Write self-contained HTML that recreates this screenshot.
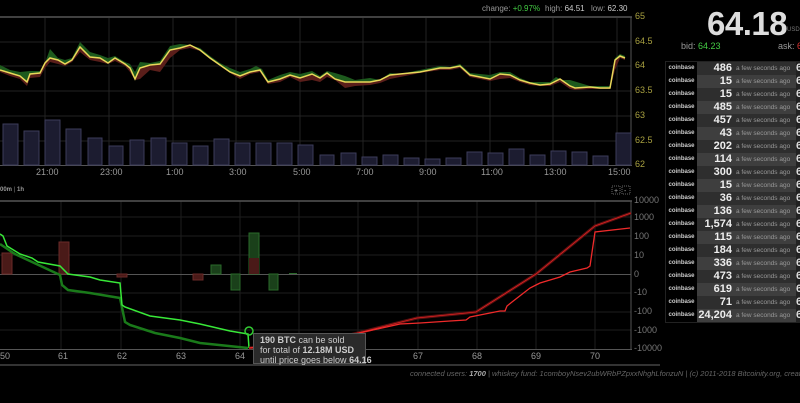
<!DOCTYPE html><html><head><style>
body{margin:0;width:800px;height:403px;background:#000;overflow:hidden;font-family:"Liberation Sans",sans-serif;position:relative}
.a{position:absolute;white-space:nowrap}
.ax{font-size:9px;color:#a8a040}
.tl{font-size:9px;color:#999}
.dl{font-size:9px;color:#777}
table{border-collapse:collapse;position:absolute;left:665px;top:61px;border:1px solid #222;table-layout:fixed;width:140px}
td{height:13px;padding:0;font-size:7px;color:#888;white-space:nowrap;overflow:hidden;line-height:13px}
td.e{width:31px;background:#000;color:#ccc;font-weight:bold;text-align:center;font-size:6px}
td.n{width:35px;text-align:right;color:#eee;font-weight:bold;font-size:11px;padding-right:2px}
td.t{width:60px;font-size:6.5px;color:#999;padding-left:2px}
td.p{width:10px;background:#222;color:#ddd;font-size:11px;font-weight:bold}
tr:nth-child(odd) td.n,tr:nth-child(odd) td.t{background:#2e2e2e}
tr:nth-child(even) td.n,tr:nth-child(even) td.t{background:#3e3e3e}
</style></head><body>
<div class="a" style="left:482px;top:4px;font-size:8px;color:#999">change: <span style="color:#4c4">+0.97%</span></div>
<div class="a" style="left:545px;top:4px;font-size:8px;color:#999">high: <span style="color:#ccc">64.51</span></div>
<div class="a" style="left:591px;top:4px;font-size:8px;color:#999">low: <span style="color:#ccc">62.30</span></div>
<div class="a" style="left:707px;top:5px;font-size:33px;color:#ddd;font-weight:bold;letter-spacing:-0.5px">64.18</div>
<div class="a" style="left:787px;top:27px;font-size:6px;color:#777">USD</div>
<div class="a" style="left:681px;top:41px;font-size:9px;color:#999">bid: <span style="color:#4c4">64.23</span></div>
<div class="a" style="left:778px;top:41px;font-size:9px;color:#999">ask: <span style="color:#d33">64</span></div>
<svg class="a" style="left:0;top:0" width="660" height="403">
<g stroke="#222" stroke-width="1">
<line x1="0" y1="42" x2="631" y2="42"/><line x1="0" y1="66" x2="631" y2="66"/><line x1="0" y1="91" x2="631" y2="91"/><line x1="0" y1="116" x2="631" y2="116"/><line x1="0" y1="141" x2="631" y2="141"/>
<line x1="45" y1="18" x2="45" y2="165"/><line x1="109" y1="18" x2="109" y2="165"/><line x1="173" y1="18" x2="173" y2="165"/><line x1="236" y1="18" x2="236" y2="165"/><line x1="300" y1="18" x2="300" y2="165"/><line x1="363" y1="18" x2="363" y2="165"/><line x1="426" y1="18" x2="426" y2="165"/><line x1="490" y1="18" x2="490" y2="165"/><line x1="553" y1="18" x2="553" y2="165"/><line x1="617" y1="18" x2="617" y2="165"/>
</g>
<line x1="0" y1="17" x2="632" y2="17" stroke="#555" stroke-width="1.5"/>
<line x1="631" y1="17" x2="631" y2="166" stroke="#555"/>
<line x1="0" y1="165.5" x2="632" y2="165.5" stroke="#555"/>
<g fill="#1c1c30" stroke="#3c3c5a">
<rect x="3" y="124" width="15" height="41"/><rect x="24" y="131" width="15" height="34"/><rect x="45" y="120" width="15" height="45"/><rect x="66" y="129" width="15" height="36"/><rect x="88" y="138" width="14" height="27"/><rect x="109" y="146" width="14" height="19"/><rect x="130" y="140" width="14" height="25"/><rect x="151" y="138" width="15" height="27"/><rect x="172" y="143" width="15" height="22"/><rect x="193" y="146" width="15" height="19"/><rect x="214" y="139" width="15" height="26"/><rect x="235" y="143" width="15" height="22"/><rect x="256" y="143" width="15" height="22"/><rect x="277" y="143" width="15" height="22"/><rect x="298" y="145" width="15" height="20"/><rect x="320" y="155" width="14" height="10"/><rect x="341" y="153" width="15" height="12"/><rect x="362" y="157" width="15" height="8"/><rect x="383" y="155" width="15" height="10"/><rect x="404" y="158" width="15" height="7"/><rect x="425" y="159" width="15" height="6"/><rect x="446" y="158" width="15" height="7"/><rect x="467" y="152" width="15" height="13"/><rect x="488" y="153" width="15" height="12"/><rect x="509" y="149" width="15" height="16"/><rect x="530" y="155" width="15" height="10"/><rect x="551" y="151" width="15" height="14"/><rect x="572" y="152" width="15" height="13"/><rect x="593" y="156" width="15" height="9"/><rect x="616" y="133" width="15" height="32"/>
</g>
<polygon fill="#1d5a1d" points="0,65 10,70 20,72 30,71 40,71 45,63 50,49 58,58 65,60 72,58 80,42 90,52 100,55 108,58 115,56 125,62 130,64 135,72 140,62 150,63 160,61 170,46 180,44 190,45 200,48 210,56 220,63 230,68 240,72 250,69 256,66 262,69 268,80 280,75 290,72 300,74 312,71 320,76 327,71 335,73 345,76 355,80 370,78 380,80 390,73 400,74 420,70 440,66 450,67 460,64 470,73 480,74 490,75 500,72 510,72 520,78 530,82 540,82 550,82 556,77 562,80 570,80 590,86 610,86 615,58 620,54 625,56 625,58 620,56 615,60 610,88 600,88 590,87 575,88 570,86 560,79 550,84 540,85 530,83 520,80 510,75 500,74 490,79 480,77 470,75 460,66 450,68 440,68 420,72 400,74 390,75 380,80 370,82 355,82 345,82 335,79 327,73 320,78 312,74 300,78 290,75 280,79 268,82 260,70 250,72 240,76 230,72 220,65 210,58 200,50 190,45 180,48 170,50 160,64 150,65 140,68 135,79 130,68 125,64 115,58 108,63 100,58 90,57 80,47 72,60 65,64 58,60 50,58 45,63 40,73 30,74 27,82 20,76 10,73 0,70"/>
<polygon fill="#5a1e1a" points="0,70 10,73 20,76 27,82 30,74 40,73 45,63 50,58 58,60 65,64 72,60 80,47 90,57 100,58 108,63 115,58 125,64 130,68 135,79 140,68 150,65 160,64 170,50 180,48 190,45 200,50 210,58 220,65 230,72 240,76 250,72 260,70 268,82 280,79 290,75 300,78 312,74 320,78 327,73 335,79 345,82 355,82 370,82 380,80 390,75 400,74 420,72 440,68 450,68 460,66 470,75 480,77 490,79 500,74 510,75 520,80 530,83 540,85 550,84 560,79 570,86 575,88 590,87 600,88 610,88 615,60 620,56 625,58 625,60 620,58 615,70 610,89 600,89 590,89 575,90 570,89 560,82 550,86 540,86 530,85 520,82 510,78 500,79 490,81 480,79 470,77 460,68 450,70 440,70 420,73 400,77 390,79 380,83 370,85 355,86 345,88 335,80 327,77 320,82 312,80 300,82 290,77 280,82 268,84 260,72 250,74 240,79 230,73 220,66 210,59 200,51 190,48 180,50 170,58 160,72 150,70 140,79 135,80 130,72 125,66 115,61 108,64 100,62 90,60 80,52 72,62 65,66 58,64 50,62 45,68 40,77 30,78 27,86 20,79 10,76 0,72"/>
<polyline fill="none" stroke="#e8d85a" stroke-width="1.5" points="0,70 10,73 20,76 27,82 30,74 40,73 45,63 50,58 58,60 65,64 72,60 80,47 90,57 100,58 108,63 115,58 125,64 130,68 135,79 140,68 150,65 160,64 170,50 180,48 190,45 200,50 210,58 220,65 230,72 240,76 250,72 260,70 268,82 280,79 290,75 300,78 312,74 320,78 327,73 335,79 345,82 355,82 370,82 380,80 390,75 400,74 420,72 440,68 450,68 460,66 470,75 480,77 490,79 500,74 510,75 520,80 530,83 540,85 550,84 560,79 570,86 575,88 590,87 600,88 610,88 615,60 620,56 625,58"/>
<g stroke="#1e1e1e"><line x1="0" y1="217" x2="631" y2="217"/><line x1="0" y1="236" x2="631" y2="236"/><line x1="0" y1="255" x2="631" y2="255"/><line x1="0" y1="293" x2="631" y2="293"/><line x1="0" y1="312" x2="631" y2="312"/><line x1="0" y1="330" x2="631" y2="330"/>
<line x1="61" y1="201" x2="61" y2="349"/><line x1="121" y1="201" x2="121" y2="349"/><line x1="181" y1="201" x2="181" y2="349"/><line x1="240" y1="201" x2="240" y2="349"/><line x1="299" y1="201" x2="299" y2="349"/><line x1="358" y1="201" x2="358" y2="349"/><line x1="418" y1="201" x2="418" y2="349"/><line x1="477" y1="201" x2="477" y2="349"/><line x1="536" y1="201" x2="536" y2="349"/><line x1="595" y1="201" x2="595" y2="349"/></g>
<line x1="0" y1="201" x2="632" y2="201" stroke="#555" stroke-width="1.5"/>
<line x1="631" y1="201" x2="631" y2="350" stroke="#555"/>
<line x1="0" y1="349.5" x2="632" y2="349.5" stroke="#555"/>
<line x1="0" y1="365" x2="800" y2="365" stroke="#444" stroke-width="1.5"/>
<line x1="0" y1="274.5" x2="631" y2="274.5" stroke="#555"/>
<g stroke-width="1"><rect x="2" y="253" width="10" height="21" fill="#4a1a18" stroke="#6a2a28"/><rect x="59" y="242" width="10" height="32" fill="#4a1a18" stroke="#6a2a28"/><rect x="117" y="274" width="10" height="3" fill="#4a1a18" stroke="#6a2a28"/><rect x="193" y="274" width="10" height="6" fill="#4a1a18" stroke="#6a2a28"/><rect x="211" y="265" width="10" height="9" fill="#1a401a" stroke="#2a6a2a"/><rect x="231" y="274" width="9" height="16" fill="#1a401a" stroke="#2a6a2a"/><rect x="249" y="233" width="10" height="41" fill="#1a401a" stroke="#2a6a2a"/><rect x="249" y="258" width="10" height="16" fill="#4a1a18"/><rect x="269" y="274" width="9" height="16" fill="#1a401a" stroke="#2a6a2a"/><rect x="289" y="273" width="8" height="1" fill="#2a6a2a"/></g>
<polyline fill="none" stroke="#1a7a1a" stroke-width="2.5" points="0,244 15,254 60,275 62,285 68,290 90,293 120,298 125,322 130,325 155,333 180,338 200,343 248,348"/>
<polyline fill="none" stroke="#38e838" stroke-width="1.5" points="0,234 3,236 7,246 20,254 32,258 38,262 60,266 68,274 90,277 100,280 120,283 122,305 125,307 150,316 180,320 200,324 230,331 248,334 249,348"/>
<polyline fill="none" stroke="#5a1010" stroke-width="3" points="249,348 330,340 417,318 476,312 536,274 595,226 631,213"/>
<polyline fill="none" stroke="#d22" stroke-width="0.8" points="249,348 330,340 417,318 476,312 536,274 595,226 631,213"/>
<polyline fill="none" stroke="#f02a2a" stroke-width="1.3" points="249,348 290,344 350,335 400,324 420,323 450,321 466,320 470,317 500,311 505,311 507,306 512,302 530,288 536,285 540,283 550,280 560,277 570,272 587,268 590,266 595,232 630,228"/>
<circle cx="249" cy="331" r="4" fill="none" stroke="#3c3" stroke-width="1.5"/>
<rect x="612" y="186" width="8" height="8" fill="none" stroke="#666" stroke-dasharray="1,1"/><rect x="622" y="186" width="8" height="8" fill="none" stroke="#666" stroke-dasharray="1,1"/>
<text x="614" y="193" font-size="7" fill="#aaa" font-family="Liberation Sans">+</text><text x="624" y="193" font-size="7" fill="#aaa" font-family="Liberation Sans">-</text>
</svg>
<div class="a ax" style="left:635px;top:11px">65</div><div class="a ax" style="left:635px;top:36px">64.5</div><div class="a ax" style="left:635px;top:60px">64</div><div class="a ax" style="left:635px;top:85px">63.5</div><div class="a ax" style="left:635px;top:110px">63</div><div class="a ax" style="left:635px;top:135px">62.5</div><div class="a ax" style="left:635px;top:159px">62</div>
<div class="a tl" style="left:36px;top:167px">21:00</div><div class="a tl" style="left:100px;top:167px">23:00</div><div class="a tl" style="left:166px;top:167px">1:00</div><div class="a tl" style="left:229px;top:167px">3:00</div><div class="a tl" style="left:293px;top:167px">5:00</div><div class="a tl" style="left:356px;top:167px">7:00</div><div class="a tl" style="left:419px;top:167px">9:00</div><div class="a tl" style="left:481px;top:167px">11:00</div><div class="a tl" style="left:544px;top:167px">13:00</div><div class="a tl" style="left:608px;top:167px">15:00</div>
<div class="a" style="left:0;top:187px;font-size:6px;color:#999;font-weight:bold">00m <span style="color:#555">|</span> 1h</div>
<div class="a dl" style="left:634px;top:195px">10000</div><div class="a dl" style="left:634px;top:212px">1000</div><div class="a dl" style="left:634px;top:231px">100</div><div class="a dl" style="left:634px;top:250px">10</div><div class="a dl" style="left:634px;top:269px">0</div><div class="a dl" style="left:634px;top:287px">-10</div><div class="a dl" style="left:634px;top:306px">-100</div><div class="a dl" style="left:634px;top:325px">-1000</div><div class="a dl" style="left:634px;top:343px">-10000</div>
<div class="a tl" style="left:0;top:351px">50</div><div class="a tl" style="left:58px;top:351px">61</div><div class="a tl" style="left:117px;top:351px">62</div><div class="a tl" style="left:176px;top:351px">63</div><div class="a tl" style="left:235px;top:351px">64</div><div class="a tl" style="left:413px;top:351px">67</div><div class="a tl" style="left:472px;top:351px">68</div><div class="a tl" style="left:531px;top:351px">69</div><div class="a tl" style="left:590px;top:351px">70</div>
<div class="a" style="left:253px;top:333px;width:113px;height:31px;background:#2a2a2a;border:1px solid #555;font-size:9px;color:#ccc;line-height:10px;padding:1px 0 0 6px;box-sizing:border-box"><b>190 BTC</b> can be sold<br>for total of <b>12.18M USD</b><br>until price goes below <b>64.16</b></div>
<div class="a" style="left:410px;top:369px;font-size:7.5px;font-style:italic;color:#666">connected users: <b style="color:#aaa">1700</b> | whiskey fund: 1comboyNsev2ubWRbPZpxxNhghLfonzuN | (c) 2011-2018 Bitcoinity.org, created by Kacper Cieśla (com</div>
<table>
<tr><td class="e">coinbase</td><td class="n">486</td><td class="t">a few seconds ago</td><td class="p">6</td></tr>
<tr><td class="e">coinbase</td><td class="n">15</td><td class="t">a few seconds ago</td><td class="p">6</td></tr>
<tr><td class="e">coinbase</td><td class="n">15</td><td class="t">a few seconds ago</td><td class="p">6</td></tr>
<tr><td class="e">coinbase</td><td class="n">485</td><td class="t">a few seconds ago</td><td class="p">6</td></tr>
<tr><td class="e">coinbase</td><td class="n">457</td><td class="t">a few seconds ago</td><td class="p">6</td></tr>
<tr><td class="e">coinbase</td><td class="n">43</td><td class="t">a few seconds ago</td><td class="p">6</td></tr>
<tr><td class="e">coinbase</td><td class="n">202</td><td class="t">a few seconds ago</td><td class="p">6</td></tr>
<tr><td class="e">coinbase</td><td class="n">114</td><td class="t">a few seconds ago</td><td class="p">6</td></tr>
<tr><td class="e">coinbase</td><td class="n">300</td><td class="t">a few seconds ago</td><td class="p">6</td></tr>
<tr><td class="e">coinbase</td><td class="n">15</td><td class="t">a few seconds ago</td><td class="p">6</td></tr>
<tr><td class="e">coinbase</td><td class="n">36</td><td class="t">a few seconds ago</td><td class="p">6</td></tr>
<tr><td class="e">coinbase</td><td class="n">136</td><td class="t">a few seconds ago</td><td class="p">6</td></tr>
<tr><td class="e">coinbase</td><td class="n">1,574</td><td class="t">a few seconds ago</td><td class="p">6</td></tr>
<tr><td class="e">coinbase</td><td class="n">115</td><td class="t">a few seconds ago</td><td class="p">6</td></tr>
<tr><td class="e">coinbase</td><td class="n">184</td><td class="t">a few seconds ago</td><td class="p">6</td></tr>
<tr><td class="e">coinbase</td><td class="n">336</td><td class="t">a few seconds ago</td><td class="p">6</td></tr>
<tr><td class="e">coinbase</td><td class="n">473</td><td class="t">a few seconds ago</td><td class="p">6</td></tr>
<tr><td class="e">coinbase</td><td class="n">619</td><td class="t">a few seconds ago</td><td class="p">6</td></tr>
<tr><td class="e">coinbase</td><td class="n">71</td><td class="t">a few seconds ago</td><td class="p">6</td></tr>
<tr><td class="e">coinbase</td><td class="n">24,204</td><td class="t">a few seconds ago</td><td class="p">6</td></tr>
</table>
</body></html>
